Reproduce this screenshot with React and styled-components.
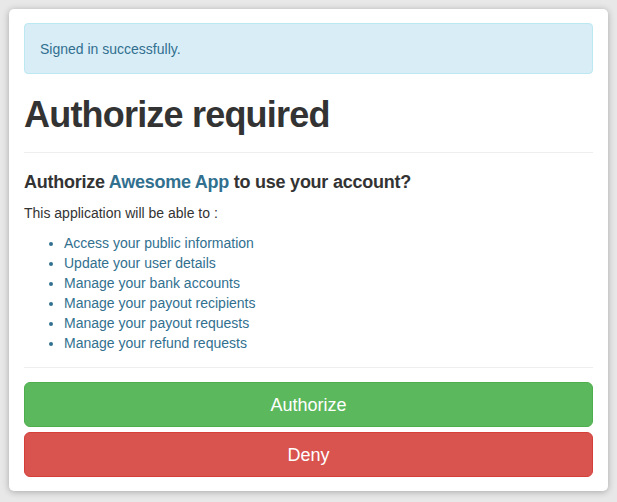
import React from "react";
import styled, { createGlobalStyle } from "styled-components";

const GlobalStyle = createGlobalStyle`
  html, body {
    margin: 0;
    padding: 0;
    background: #e8e8e8;
  }
  body {
    min-height: 100vh;
    font-family: "Liberation Sans", Arial, Helvetica, sans-serif;
    color: #333;
    font-size: 14px;
    line-height: 20px;
  }
  * { box-sizing: border-box; }
`;

const Page = styled.div`
  padding: 9px 0 0 9px;
`;

const Card = styled.div`
  width: 599px;
  background: #fff;
  border-radius: 5px;
  padding: 14px 15px 14px;
  box-shadow: 0 1px 7px rgba(0, 0, 0, 0.28);
`;

const Alert = styled.div`
  background: #d9edf7;
  border: 1px solid #bce8f1;
  color: #31708f;
  border-radius: 4px;
  padding: 15px 15px 14px;
  font-size: 14px;
  line-height: 20px;
`;

const PageHeader = styled.div`
  margin-top: 21px;
  padding-bottom: 17px;
  border-bottom: 1px solid #eee;
`;

const Title = styled.h1`
  margin: 0;
  font-size: 36px;
  line-height: 40px;
  font-weight: 700;
  letter-spacing: -0.8px;
  color: #333;
`;

const Question = styled.h4`
  margin: 19px 0 0;
  font-size: 18px;
  line-height: 20px;
  font-weight: 700;
  letter-spacing: -0.25px;
  color: #333;
`;

const AppName = styled.span`
  color: #31708f;
`;

const Lead = styled.p`
  margin: 11px 0 0;
  font-size: 14px;
  line-height: 20px;
  color: #333;
`;

const Scopes = styled.ul`
  margin: 10px 0 0;
  padding-left: 40px;
  list-style: disc;
  color: #31708f;
`;

const Scope = styled.li`
  font-size: 14px;
  line-height: 20px;
`;

const Divider = styled.hr`
  margin: 14px 0 0;
  border: 0;
  border-top: 1px solid #eee;
  height: 0;
`;

const Actions = styled.div`
  display: flex;
  flex-direction: column;
  gap: 5px;
  margin-top: 14px;
`;

const Button = styled.button`
  display: block;
  width: 100%;
  padding: 11px 16px 9px;
  font-family: "Liberation Sans", Arial, Helvetica, sans-serif;
  font-size: 18px;
  line-height: 23px;
  color: #fff;
  text-align: center;
  border-radius: 6px;
  cursor: pointer;
  background: ${(p) => (p.$variant === "danger" ? "#d9534f" : "#5cb85c")};
  border: 1px solid ${(p) => (p.$variant === "danger" ? "#d43f3a" : "#4cae4c")};
`;

const scopes = [
  "Access your public information",
  "Update your user details",
  "Manage your bank accounts",
  "Manage your payout recipients",
  "Manage your payout requests",
  "Manage your refund requests",
];

export default function App() {
  return (
    <>
      <GlobalStyle />
      <Page>
        <Card>
          <Alert>Signed in successfully.</Alert>
          <PageHeader>
            <Title>Authorize required</Title>
          </PageHeader>
          <Question>
            Authorize <AppName>Awesome App</AppName> to use your account?
          </Question>
          <Lead>This application will be able to :</Lead>
          <Scopes>
            {scopes.map((s) => (
              <Scope key={s}>{s}</Scope>
            ))}
          </Scopes>
          <Divider />
          <Actions>
            <Button $variant="success">Authorize</Button>
            <Button $variant="danger">Deny</Button>
          </Actions>
        </Card>
      </Page>
    </>
  );
}
